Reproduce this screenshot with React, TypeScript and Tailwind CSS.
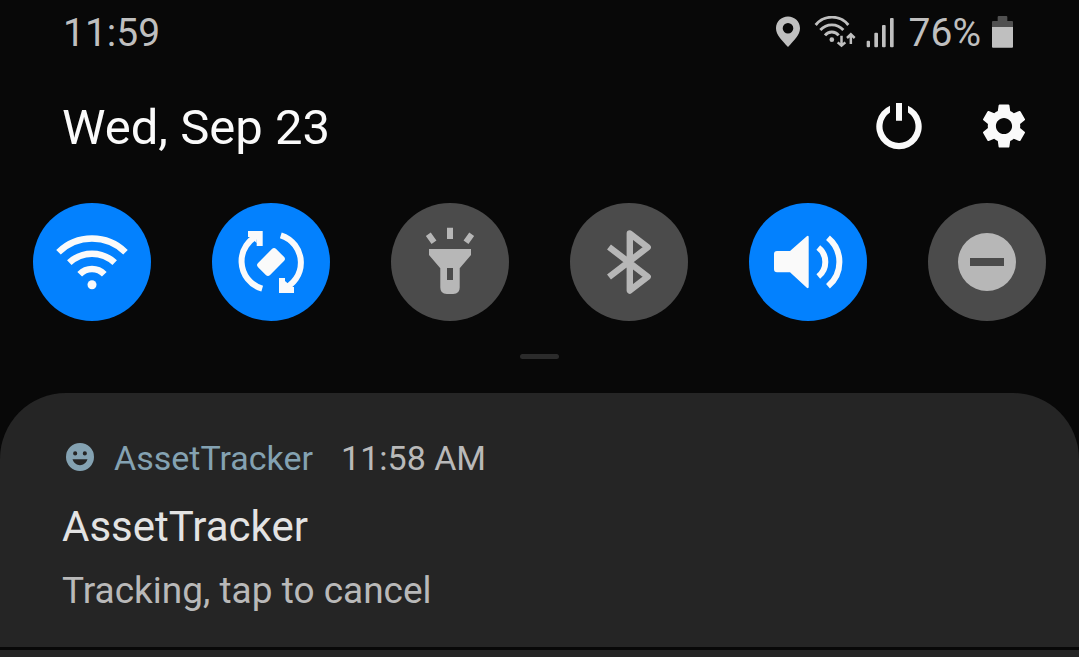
import type { ReactNode } from "react";
import { MdSettings } from "react-icons/md";

type Tile = { label: string; active: boolean; icon: ReactNode };

const tiles: Tile[] = [
  {
    label: "Wi-Fi",
    active: true,
    icon: (
      <>
        <g fill="none" stroke="currentColor" strokeWidth="6.5">
          <path d="M25.5 49.3A47.8 47.8 0 0 1 92.5 49.3" />
          <path d="M36.3 59.7A33 33 0 0 1 81.7 59.7" />
          <path d="M46.7 71.3A17 17 0 0 1 71.3 71.3" />
        </g>
        <circle cx="59" cy="81.7" r="4.5" fill="currentColor" />
      </>
    ),
  },
  {
    label: "Auto rotate",
    active: true,
    icon: (
      <>
        <g fill="none" stroke="currentColor" strokeWidth="6">
          <path d="M50.2 85.7A28.6 28.6 0 0 1 48 31.500" />
          <path d="M36 31H47.7V43" />
          <path d="M68.800 32.3A28.6 28.6 0 0 1 70 86.500" />
          <path d="M82 87H70V75" />
        </g>
        <path fill="currentColor" d="M38 34H44.700V40Z" />
        <path fill="currentColor" d="M80 84H73V78Z" />
        <rect x="46.2" y="50.5" width="25.6" height="17" rx="3" fill="currentColor" transform="rotate(-45 59 59)" />
      </>
    ),
  },
  {
    label: "Flashlight",
    active: false,
    icon: (
      <>
        <path
          fill="currentColor"
          fillRule="evenodd"
          d="M38 46H80V52L68.7 65.3V84.5Q68.7 91 62.2 91H55.8Q49.3 91 49.3 84.5V65.3L38 52ZM56 65V77H62V65Z"
        />
        <g stroke="currentColor" strokeWidth="6">
          <path d="M59 24.7V36M37.3 31.3L43 39.3M80.7 31.3L75 39.3" />
        </g>
      </>
    ),
  },
  {
    label: "Bluetooth",
    active: false,
    icon: (
      <path
        fill="none"
        stroke="currentColor"
        strokeWidth="6.4"
        strokeLinejoin="round"
        d="M39 44L77.7 73.7L59.8 87.5V30.5L77.7 44.3L39 74"
      />
    ),
  },
  {
    label: "Sound",
    active: true,
    icon: (
      <>
        <path
          fill="currentColor"
          d="M28 48H41L57.8 33.2Q59.7 32.2 59.7 34.2V83.8Q59.7 85.8 57.8 84.8L41 69.3H28Q25 69.3 25 66.3V51Q25 48 28 48Z"
        />
        <g fill="none" stroke="currentColor" strokeWidth="6">
          <path d="M69.3 44.5A18.5 18.5 0 0 1 69.3 73.5" />
          <path d="M79 34.7A31.6 31.6 0 0 1 79 83.3" />
        </g>
      </>
    ),
  },
  {
    label: "Do not disturb",
    active: false,
    icon: <path fill="currentColor" fillRule="evenodd" d="M59 30A29 29 0 1 0 59 88A29 29 0 1 0 59 30ZM42 55H76V63H42Z" />,
  },
];

function StatusBar() {
  return (
    <div className="flex h-[66px] items-center justify-between pl-[63px] pr-[66px] text-[39px] leading-[48px] text-[#bfbfbf]">
      <time>11:59</time>
      <div className="flex items-center">
        <svg className="mb-[3px] mr-[14px] h-8 w-6" viewBox="0 0 24 32" aria-label="Location">
          <path
            fill="currentColor"
            fillRule="evenodd"
            d="M12 0.5C18.6 0.5 24 5.6 24 12.2C24 19 17.8 24.5 12 31C6.2 24.5 0 19 0 12.2C0 5.6 5.4 0.5 12 0.5ZM12 6.9A5.3 5.3 0 1 0 12 17.5A5.3 5.3 0 1 0 12 6.9Z"
          />
        </svg>
        <svg className="mb-[3px] mr-[10px] h-8 w-[42px]" viewBox="162 42 126 96" aria-label="Wi-Fi">
          <g fill="none" stroke="currentColor" strokeWidth="8.5">
            <path d="M167 69A63 63 0 0 1 265 69" />
            <path d="M181 84A46 46 0 0 1 250 84" />
            <path d="M195 100A26 26 0 0 1 236 100" />
          </g>
          <circle cx="215.5" cy="113" r="7" fill="currentColor" />
          <g fill="none" stroke="currentColor" strokeWidth="7.5">
            <path d="M244.500 101V132M233 121L244.500 131L256 121" />
            <path d="M272.500 126V96M261 108L272.500 97L284 108" />
          </g>
        </svg>
        <svg className="mb-[3px] mr-[15px] h-8 w-7" viewBox="318 42 84 96" aria-label="Signal">
          <g fill="currentColor">
            <rect x="320" y="116" width="10" height="20" rx="3" />
            <rect x="343" y="92" width="11" height="44" rx="3" />
            <rect x="366" y="69" width="11" height="67" rx="3" />
            <rect x="390" y="48" width="11" height="88" rx="3" />
          </g>
        </svg>
        <span className="mr-[11px]">76%</span>
        <svg className="mb-[3px] h-8 w-[21px]" viewBox="696 45 63 96" aria-label="Battery">
          <path fill="#505050" d="M713 48Q713 45 716 45H739Q742 45 742 48V60H756Q759 60 759 63V79H696V63Q696 60 699 60H713Z" />
          <path fill="currentColor" d="M696 78H759V137Q759 140 756 140H699Q696 140 696 137Z" />
        </svg>
      </div>
    </div>
  );
}

function Header() {
  return (
    <header className="flex h-[124px] items-center justify-between pl-[62px] pr-12">
      <h1 className="text-[49px] leading-[56px] text-[#fafafa]">Wed, Sep 23</h1>
      <div className="flex items-center gap-[51px] pb-1 text-[#fafafa]">
        <button type="button" aria-label="Power">
          <svg className="size-[54px]" viewBox="-4 -4 54 54">
            <path
              fill="currentColor"
              d="M14 2.7A22.7 22.7 0 1 0 32 2.7V9.6A16.5 16.500 0 1 1 14 9.600ZM20 0H26V17.700H20Z"
            />
          </svg>
        </button>
        <button type="button" aria-label="Settings">
          <MdSettings className="size-[54px]" />
        </button>
      </div>
    </header>
  );
}

function QuickTiles() {
  return (
    <div className="mt-[13px] flex justify-between px-[33px]">
      {tiles.map((tile) => (
        <button
          key={tile.label}
          type="button"
          aria-label={tile.label}
          aria-pressed={tile.active}
          className={
            tile.active
              ? "size-[118px] rounded-full bg-[#0381fe] text-[#fafafa]"
              : "size-[118px] rounded-full bg-[#4b4b4b] text-[#b7b7b7]"
          }
        >
          <svg className="size-full" viewBox="0 0 118 118">
            {tile.icon}
          </svg>
        </button>
      ))}
    </div>
  );
}

function Notification() {
  return (
    <article className="rounded-t-[66px] bg-[#252525] px-[62px] pb-8 pt-[41px]">
      <div className="flex items-center text-[34px] leading-[48px]">
        <svg className="mb-[2px] ml-1 mr-5 size-7 text-[#84a2b2]" viewBox="0 0 84 84" aria-hidden="true">
          <path
            fill="currentColor"
            fillRule="evenodd"
            d="M42 0A42 42 0 1 0 42 84A42 42 0 1 0 42 0ZM27.500 25A6.200 6.200 0 1 1 27.500 37.400A6.200 6.200 0 1 1 27.500 25ZM56.500 25A6.200 6.200 0 1 1 56.500 37.400A6.200 6.200 0 1 1 56.500 25ZM19.500 49H64.500C61 60 52 66.500 42 66.500C32 66.500 23 60 19.500 49Z"
          />
        </svg>
        <span className="mr-7 text-[#84a2b2]">AssetTracker</span>
        <time className="text-[#b9b9b9]">11:58 AM</time>
      </div>
      <h2 className="mt-[17px] text-[42px] leading-[56px] text-[#e3e3e3]">AssetTracker</h2>
      <p className="mt-3 text-[37px] leading-[48px] text-[#b9b9b9]">Tracking, tap to cancel</p>
    </article>
  );
}

export default function App() {
  return (
    <main className="flex min-h-screen flex-col bg-[#080808] font-['Roboto',sans-serif]">
      <StatusBar />
      <Header />
      <QuickTiles />
      <div className="mb-[34px] mt-[33px] h-[5px] w-[39px] self-center rounded-full bg-[#2b2b2b]" />
      <Notification />
      <div className="mt-[3px] flex-1 bg-[#252525]" />
    </main>
  );
}
